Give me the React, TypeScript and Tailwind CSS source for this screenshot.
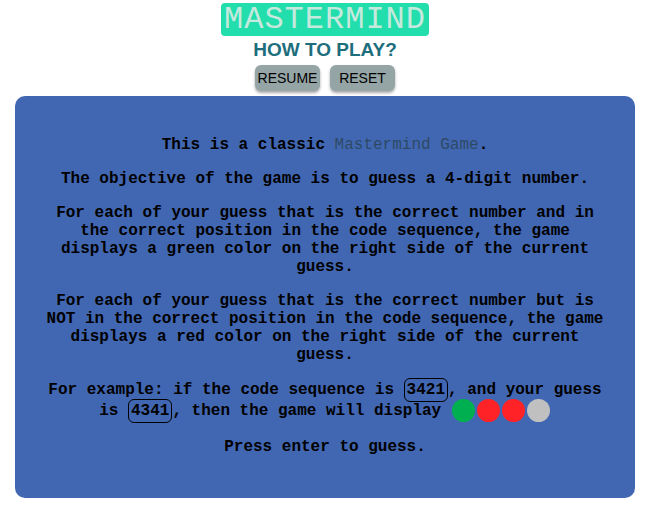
import React from "react";

const mono = { fontFamily: '"Liberation Mono", "Courier New", monospace' };

const Code: React.FC<{ children: React.ReactNode }> = ({ children }) => (
  <span className="rounded-md border border-black px-[2px] py-[2px]">{children}</span>
);

const Dot: React.FC<{ color: string }> = ({ color }) => (
  <span className={`inline-block h-[23px] w-[23px] shrink-0 rounded-full mx-[1px] ${color}`} />
);

const App: React.FC = () => {
  return (
    <div className="min-h-[506px] bg-white pt-[3px] flex flex-col items-center">
      {/* Title */}
      <div
        className="bg-[#22deac] rounded-[4px] px-[3px] h-[33px] flex items-center text-[32px] tracking-[1px] text-[#c6e9de] leading-none"
        style={mono}
      >
        MASTERMIND
      </div>
      <div
        className="mt-[3px] text-[19px] font-bold text-[#1d6e7c] leading-[22px]"
        style={{ fontFamily: '"Liberation Sans", Arial, sans-serif' }}
      >
        HOW TO PLAY?
      </div>
      {/* Buttons */}
      <div
        className="mt-[4px] flex gap-[10px] text-[14px] text-black leading-none"
        style={{ fontFamily: '"Liberation Sans", Arial, sans-serif' }}
      >
        <button className="w-[65px] h-[26px] rounded-[6px] bg-[#95a5a6] shadow-[0_2px_3px_rgba(0,0,0,0.35)]">
          RESUME
        </button>
        <button className="w-[65px] h-[26px] rounded-[6px] bg-[#95a5a6] shadow-[0_2px_3px_rgba(0,0,0,0.35)]">
          RESET
        </button>
      </div>
      {/* Instructions panel */}
      <div
        className="mt-[5px] mx-[15px] self-stretch rounded-[10px] bg-[#4267b2] px-6 pt-6 pb-[26px] text-center text-[16px] leading-[18px] font-bold text-black"
        style={mono}
      >
        <p className="my-4">
          This is a classic <span className="text-[#2c4a66] font-normal">Mastermind Game</span>.
        </p>
        <p className="my-4">The objective of the game is to guess a 4-digit number.</p>
        <p className="my-4">
          For each of your guess that is the correct number and in the correct position in the code
          sequence, the game displays a green color on the right side of the current guess.
        </p>
        <p className="my-4">
          For each of your guess that is the correct number but is NOT in the correct position in the
          code sequence, the game displays a red color on the right side of the current guess.
        </p>
        <p className="my-4 leading-[21px]">
          For example: if the code sequence is <Code>3421</Code>, and your guess is <Code>4341</Code>,
          then the game will display{" "}
          <span className="inline-flex h-[16px] items-center align-middle">
            <Dot color="bg-[#00b050]" />
            <Dot color="bg-[#ff2226]" />
            <Dot color="bg-[#ff2226]" />
            <Dot color="bg-[#c0c0c0]" />
          </span>
        </p>
        <p className="my-4">Press enter to guess.</p>
      </div>
    </div>
  );
};

export default App;
